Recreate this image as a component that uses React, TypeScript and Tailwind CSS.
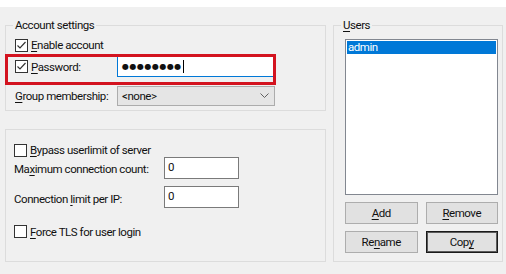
import type { ReactNode } from 'react';

// Win10 style checkbox, 13x13
function Check({ checked }: { checked?: boolean }) {
  return (
    <span className="w-[13px] h-[13px] shrink-0 border border-[#333333] bg-white flex items-center justify-center">
      {checked && (
        <svg width="11" height="11" viewBox="0 0 11 11">
          <path d="M1.5 5.5 L4 8 L9.5 2" fill="none" stroke="#333333" strokeWidth="1.2" />
        </svg>
      )}
    </span>
  );
}

function Key({ children }: { children: ReactNode }) {
  return <span className="underline underline-offset-[2px]">{children}</span>;
}

function Button({ children, isDefault }: { children: ReactNode; isDefault?: boolean }) {
  return (
    <div
      className={
        isDefault
          ? 'h-[22px] flex items-center justify-center bg-[#e1e1e1] border border-[#1a1a1a] shadow-[inset_0_0_0_1px_#5a5a5a]'
          : 'h-[22px] flex items-center justify-center bg-[#e1e1e1] border border-[#adadad]'
      }
    >
      {children}
    </div>
  );
}

function NumberBox() {
  return (
    <div className="w-[75px] h-[22px] bg-white border border-[#7a7a7a] px-[3px] pt-[2px] leading-[14px]">0</div>
  );
}

export default function App() {
  return (
    <div className="w-[506px] h-[274px] bg-[#f0f0f0] flex flex-col text-[11.5px] leading-[16px] tracking-[-0.45px] text-[#111] font-['Roboto','Segoe_UI',sans-serif]">
      <div className="h-[7px] bg-white" />

      <div className="flex pl-[5px] pt-[10px] gap-[7px]">
        {/* Left column */}
        <div className="relative w-[321px] flex flex-col">
          {/* Account settings */}
          <fieldset className="h-[94px] border border-[#dcdcdc]">
            <legend className="ml-[7px] px-[2px]">Account settings</legend>
            <div className="pl-[9px] pt-[4px] flex flex-col">
              <div className="h-[16px] flex items-center gap-[3px]">
                <Check checked />
                <span>
                  <Key>E</Key>nable account
                </span>
              </div>
              <div className="mt-[3px] h-[21px] flex items-center">
                <div className="w-[102px] flex items-center gap-[3px]">
                  <Check checked />
                  <span>
                    <Key>P</Key>assword:
                  </span>
                </div>
                <div className="w-[157px] h-[21px] bg-white border border-[#0078d7] flex items-center pl-[4px]">
                  <span className="text-[8px] leading-[10px] tracking-[0.5px] font-['DejaVu_Sans',sans-serif]">
                    ●●●●●●●●
                  </span>
                  <span className="ml-[1px] w-px h-[13px] bg-black" />
                </div>
              </div>
              <div className="mt-[9px] h-[20px] flex items-center">
                <span className="w-[102px]">
                  <Key>G</Key>roup membership:
                </span>
                <div className="w-[158px] h-[20px] bg-[#e5e5e5] border border-[#acacac] flex items-center justify-between pl-[4px] pr-[5px]">
                  <span>&lt;none&gt;</span>
                  <svg width="9" height="6" viewBox="0 0 9 6">
                    <path d="M0.5 0.5 L4.5 4.5 L8.5 0.5" fill="none" stroke="#606060" strokeWidth="1" />
                  </svg>
                </div>
              </div>
            </div>
          </fieldset>

          {/* Limits */}
          <div className="mt-[18px] h-[133px] border border-[#dcdcdc] pl-[8px] pt-[13px] flex flex-col">
            <div className="h-[14px] flex items-center gap-[3px]">
              <Check />
              <span>
                <Key>B</Key>ypass userlimit of server
              </span>
            </div>
            <div className="h-[22px] flex items-center">
              <span className="w-[150px] mt-[2px]">
                Ma<Key>x</Key>imum connection count:
              </span>
              <NumberBox />
            </div>
            <div className="mt-[7px] h-[22px] flex items-center">
              <span className="w-[150px] mt-[3px]">
                Connection <Key>l</Key>imit per IP:
              </span>
              <NumberBox />
            </div>
            <div className="mt-[17px] h-[13px] flex items-center gap-[3px]">
              <Check />
              <span>
                <Key>F</Key>orce TLS for user login
              </span>
            </div>
          </div>

          {/* red highlight annotation */}
          <div className="absolute left-0 top-[37px] w-[271px] h-[31px] border-[3px] border-[#d3131f]" />
        </div>

        {/* Users */}
        <fieldset className="w-[170px] h-[245px] border border-[#dcdcdc]">
          <legend className="ml-[7px] px-[2px]">
            <Key>U</Key>sers
          </legend>
          <div className="pl-[11px] pt-[6px] flex flex-col">
            <div className="w-[153px] h-[156px] bg-white border border-[#828790] p-[1px]">
              <div className="h-[13px] bg-[#0078d7] text-white leading-[13px] pl-[1px]">admin</div>
            </div>
            <div className="w-[153px] mt-[7px] grid grid-cols-2 gap-x-[8px] gap-y-[7px]">
              <Button>
                <Key>A</Key>dd
              </Button>
              <Button>
                <Key>R</Key>emove
              </Button>
              <Button>
                Re<Key>n</Key>ame
              </Button>
              <Button isDefault>
                Cop<Key>y</Key>
              </Button>
            </div>
          </div>
        </fieldset>
      </div>
    </div>
  );
}
